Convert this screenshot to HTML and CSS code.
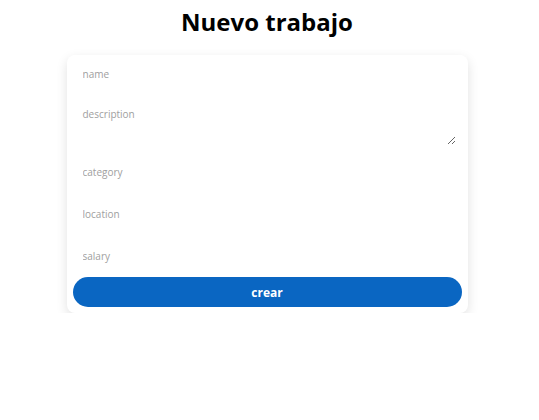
FILE: index.html
```html
<!DOCTYPE html>
<html lang="es">
<head>
<meta charset="utf-8">
<title>Nuevo trabajo</title>
<link rel="stylesheet" href="styles.css">
</head>
<body>
<h1 class="title">Nuevo trabajo</h1>
<form class="card">
  <input class="field" type="text" placeholder="name">
  <textarea class="field area" placeholder="description"></textarea>
  <input class="field" type="text" placeholder="category">
  <input class="field" type="text" placeholder="location">
  <input class="field" type="text" placeholder="salary">
  <button class="submit" type="button">crear</button>
</form>
</body>
</html>
```
FILE: styles.css
```css
* { box-sizing: border-box; }
html, body { margin: 0; padding: 0; background: #fff; }
body { font-family: "Open Sans", "Noto Sans", sans-serif; padding-right: 5px; }
.title {
  margin: 0;
  padding-top: 5px;
  height: 55px;
  text-align: center;
  font-size: 24px;
  font-weight: 700;
  line-height: 34px;
  color: #000;
}
.card {
  width: 401px;
  margin: 0 auto;
  padding: 0 6px 6px;
  display: flex;
  flex-direction: column;
  gap: 4px;
  background: #fff;
  border-radius: 8px;
  box-shadow: 0 4px 12px rgba(0,0,0,0.12);
}
.field {
  height: 38px;
  border: none;
  outline: none;
  padding: 0 10px;
  font-family: inherit;
  font-size: 10px;
  color: #333;
  background: #fff;
}
.field::placeholder { color: #a0a0a0; }
.area {
  height: 48px;
  margin-right: 6px;
  margin-bottom: 4px;
  padding-top: 10px;
  resize: vertical;
}
.submit {
  margin-top: -2px;
  height: 30px;
  border: none;
  border-radius: 15px;
  background: #0a66c2;
  color: #fff;
  font-family: inherit;
  font-size: 12px;
  font-weight: 700;
}
```
